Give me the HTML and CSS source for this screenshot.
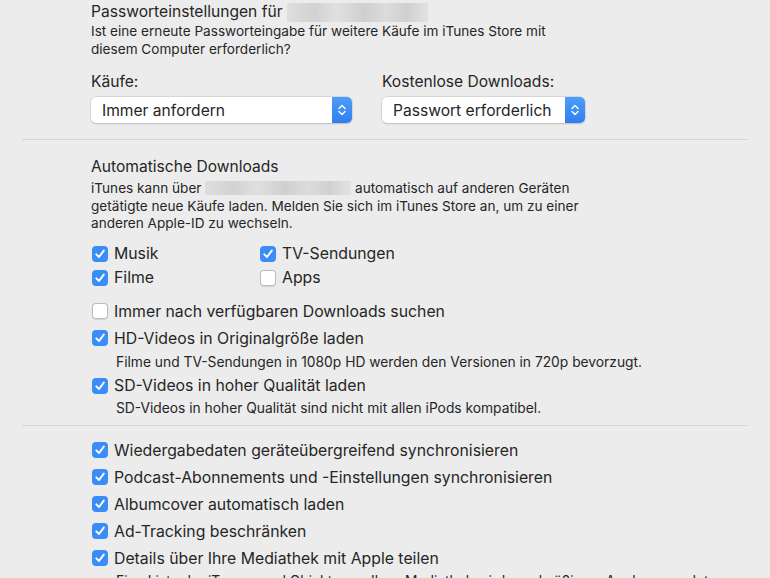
FILE: index.html
```html
<!DOCTYPE html>
<html lang="de">
<head>
    <meta charset="UTF-8">
    <meta name="viewport" content="width=device-width, initial-scale=1.0">
    <title>Store - Einstellungen</title>
    <link rel="stylesheet" href="styles.css">
</head>
<body>
    <div id="pane">
        <div class="section" id="password">
            <h2 class="title">Passworteinstellungen für <span class="blur blur-title"></span></h2>
            <p class="desc">Ist eine erneute Passworteingabe für weitere Käufe im iTunes Store mit<br>diesem Computer erforderlich?</p>

            <div class="popups">
                <div class="field">
                    <label>Käufe:</label>
                    <div class="popup popup-wide">
                        <span>Immer anfordern</span>
                        <span class="stepper"><svg width="8" height="12" viewBox="0 0 8 12"><path d="M1 4.5L4 1.5L7 4.5M1 7.5L4 10.5L7 7.5" fill="none" stroke="#fff" stroke-width="1.4" stroke-linecap="round" stroke-linejoin="round"/></svg></span>
                    </div>
                </div>
                <div class="field">
                    <label>Kostenlose Downloads:</label>
                    <div class="popup popup-small">
                        <span>Passwort erforderlich</span>
                        <span class="stepper"><svg width="8" height="12" viewBox="0 0 8 12"><path d="M1 4.5L4 1.5L7 4.5M1 7.5L4 10.5L7 7.5" fill="none" stroke="#fff" stroke-width="1.4" stroke-linecap="round" stroke-linejoin="round"/></svg></span>
                    </div>
                </div>
            </div>
        </div>

        <div class="sep"></div>

        <div class="section" id="downloads">
            <h2 class="title">Automatische Downloads</h2>
            <p class="desc">iTunes kann über <span class="blur blur-mail"></span> automatisch auf anderen Geräten<br>getätigte neue Käufe laden. Melden Sie sich im iTunes Store an, um zu einer<br>anderen Apple-ID zu wechseln.</p>

            <div class="grid">
                <div class="check on"><i></i>Musik</div>
                <div class="check on"><i></i>TV-Sendungen</div>
                <div class="check on"><i></i>Filme</div>
                <div class="check"><i></i>Apps</div>
            </div>

            <div class="list">
                <div class="check tall"><i></i>Immer nach verfügbaren Downloads suchen</div>
                <div class="check tall on"><i></i>HD-Videos in Originalgröße laden</div>
                <p class="note">Filme und TV-Sendungen in 1080p HD werden den Versionen in 720p bevorzugt.</p>
                <div class="check on"><i></i>SD-Videos in hoher Qualität laden</div>
                <p class="note">SD-Videos in hoher Qualität sind nicht mit allen iPods kompatibel.</p>
            </div>
        </div>

        <div class="sep"></div>

        <div class="section" id="misc">
            <div class="check tall on"><i></i>Wiedergabedaten geräteübergreifend synchronisieren</div>
            <div class="check tall on"><i></i>Podcast-Abonnements und -Einstellungen synchronisieren</div>
            <div class="check tall on"><i></i>Albumcover automatisch laden</div>
            <div class="check tall on"><i></i>Ad-Tracking beschränken</div>
            <div class="check tall on"><i></i>Details über Ihre Mediathek mit Apple teilen</div>
            <p class="note">Eine Liste der iTunes- und Objekte aus Ihrer Mediathek wird regelmäßig an Apple gesendet, um Ihnen Empfehlungen zu geben.</p>
        </div>
    </div>
</body>
</html>
```

FILE: styles.css
```css
body {
    margin: 0;
    padding: 0;
    background-color: #ececec;
    color: #262626;
    font-family: Inter, "Noto Sans", sans-serif;
    overflow: hidden;
}

#pane {
    padding: 2px 22px 0;
}

.section {
    padding-left: 69px;
}

.sep {
    height: 1px;
    background-color: #d6d6d6;
}

.title {
    margin: 0;
    font-size: 15.6px;
    font-weight: normal;
    line-height: 20px;
    display: flex;
    align-items: center;
}

.desc {
    margin: 0;
    font-size: 13.6px;
    line-height: 17.5px;
}

#password .desc {
    margin-top: 1px;
}

.blur {
    display: inline-block;
    vertical-align: middle;
    background: linear-gradient(90deg, #dedede, #d2d2d2 20%, #e0e0e0 35%, #cfcfcf 55%, #dcdcdc 70%, #d0d0d0 85%, #e2e2e2);
}

.blur-title {
    width: 141px;
    height: 19px;
    margin-left: 4px;
}

.blur-mail {
    width: 146px;
    height: 14px;
    margin-top: -2px;
}

/* popups */

#password {
    padding-bottom: 16px;
}

.popups {
    display: flex;
    gap: 30px;
    margin-top: 14px;
}

.field label {
    display: block;
    font-size: 15.6px;
    line-height: 20px;
    margin-bottom: 5px;
}

.popup {
    display: flex;
    align-items: center;
    justify-content: space-between;
    height: 26px;
    box-sizing: border-box;
    background-color: #fff;
    border-radius: 5px;
    box-shadow: 0 0 0 0.5px #c4c4c4, 0 1px 1.5px rgba(0, 0, 0, 0.18);
    font-size: 15.6px;
    padding-left: 11px;
    overflow: hidden;
}

.popup-wide {
    width: 261px;
}

.popup-small {
    width: 203px;
}

.stepper {
    width: 20px;
    height: 26px;
    display: flex;
    align-items: center;
    justify-content: center;
    background: linear-gradient(#4d9ef9, #2f7ef0);
}

/* checkboxes */

#downloads {
    padding-top: 16px;
}

#downloads .title {
    line-height: 22px;
}

#downloads .desc {
    margin-top: 2px;
}

.grid {
    display: grid;
    grid-template-columns: 168px auto;
    margin-top: 9px;
}

.check {
    display: flex;
    align-items: center;
    height: 24px;
    font-size: 15.8px;
    white-space: nowrap;
}

.check.tall {
    height: 27px;
}

.check i {
    width: 16px;
    height: 16px;
    box-sizing: border-box;
    border-radius: 4px;
    margin: 0 6px 0 1px;
    background-color: #fff;
    box-shadow: inset 0 0 0 1px #bdbdbd, 0 0.5px 1px rgba(0, 0, 0, 0.12);
    flex-shrink: 0;
}

.check.on i {
    background: #3a8df6 url("data:image/svg+xml,%3Csvg xmlns='http://www.w3.org/2000/svg' width='16' height='16'%3E%3Cpath d='M4.3 8.3L7 11L11.8 4.6' fill='none' stroke='white' stroke-width='1.9' stroke-linecap='round' stroke-linejoin='round'/%3E%3C/svg%3E") no-repeat center;
    box-shadow: none;
}

.list {
    margin-top: 8px;
}

.note {
    margin: 2px 0 0;
    padding-left: 25px;
    font-size: 13.8px;
    line-height: 17px;
}

.list .note + .check {
    margin-top: 3px;
}

.list .note:last-child {
    margin-bottom: 8px;
}

#misc {
    padding-top: 11px;
}

#misc .note {
    margin-top: 1px;
}
```
